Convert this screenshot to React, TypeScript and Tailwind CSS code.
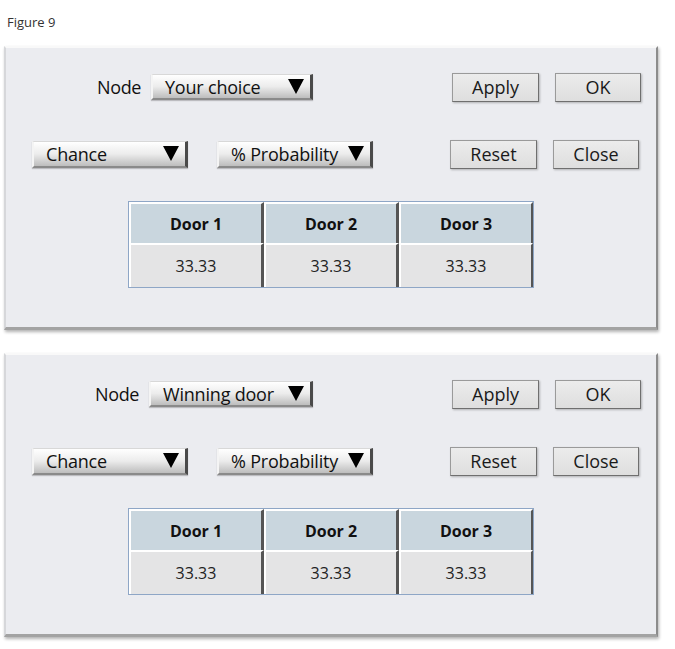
import { ReactNode } from 'react'

const font = { fontFamily: '"Open Sans", "DejaVu Sans", sans-serif' }

function Arrow() {
  return (
    <svg width="16" height="15" viewBox="0 0 16 15" className="shrink-0">
      <polygon points="0,0 16,0 8,15" fill="#000" />
    </svg>
  )
}

function Dropdown({ label, width, height }: { label: string; width: string; height: string }) {
  return (
    <div
      className={`${width} ${height} flex items-center pl-3 pr-[6px] bg-gradient-to-b from-[#ffffff] via-[#ececec] to-[#bdbdbd] border-t border-t-[#d8d8d8] border-l-2 border-l-[#f4f4f4] border-r-[3px] border-r-[#4a4a4a] border-b-2 border-b-[#8a8a8a] shadow-[0_1px_1px_rgba(0,0,0,0.2)]`}
    >
      <span className="flex-1 text-[18px] leading-none tracking-[-0.2px] text-[#111]">{label}</span>
      <Arrow />
    </div>
  )
}

function Button({ children, width }: { children: ReactNode; width: string }) {
  return (
    <div
      className={`${width} h-[29px] flex items-center justify-center bg-gradient-to-b from-[#ececec] to-[#dedede] border border-[#9a9a9a] border-r-[#6f6f6f] border-b-[#6f6f6f] shadow-[1px_1px_2px_rgba(0,0,0,0.25)] text-[18px] leading-none text-[#1a1a1a]`}
    >
      {children}
    </div>
  )
}

function Cell({ children, header, last }: { children: ReactNode; header?: boolean; last?: boolean }) {
  return (
    <div
      className={`flex-1 flex items-center justify-center border-l-2 border-l-white border-t-2 border-t-white ${
        last ? 'border-r-2 border-r-[#555]' : 'border-r-[3px] border-r-[#555]'
      } ${header ? 'bg-[#c9d6de] font-bold text-[16px] text-[#111]' : 'bg-[#e4e4e5] text-[16px] text-[#222]'}`}
    >
      {children}
    </div>
  )
}

function Panel({ node, ddLeft, ddWidth }: { node: string; ddLeft: string; ddWidth: string }) {
  return (
    <div className="ml-[4px] w-[654px] bg-[#ebecf0] border-t-2 border-t-[#f9f9f9] border-l-2 border-l-[#d6d7da] border-r-2 border-r-[#8c8c8c] border-b-[3px] border-b-[#a3a3a3] shadow-[1px_2px_3px_rgba(0,0,0,0.3)] pt-[24px] pb-[39px]">
      <div className="flex items-center h-[30px]">
        <div className={`${ddLeft} flex justify-end pr-[10px]`}>
          <span className="text-[18px] leading-none tracking-[-0.4px] text-[#111]">Node</span>
        </div>
        <Dropdown label={node} width={ddWidth} height="h-[26px]" />
        <div className="ml-auto mr-[15px] flex gap-[16px]">
          <Button width="w-[87px]">Apply</Button>
          <Button width="w-[86px]">OK</Button>
        </div>
      </div>
      <div className="flex items-center h-[30px] mt-[37px]">
        <div className="ml-[26px]">
          <Dropdown label="Chance" width="w-[156px]" height="h-[27px]" />
        </div>
        <div className="ml-[29px]">
          <Dropdown label="% Probability" width="w-[156px]" height="h-[27px]" />
        </div>
        <div className="ml-auto mr-[17px] flex gap-[16px]">
          <Button width="w-[87px]">Reset</Button>
          <Button width="w-[86px]">Close</Button>
        </div>
      </div>
      <div className="ml-[122px] mt-[32px] w-[406px] border border-[#8ea6c6] flex flex-col">
        <div className="flex h-[41px]">
          <Cell header>Door 1</Cell>
          <Cell header>Door 2</Cell>
          <Cell header last>Door 3</Cell>
        </div>
        <div className="flex h-[44px]">
          <Cell>33.33</Cell>
          <Cell>33.33</Cell>
          <Cell last>33.33</Cell>
        </div>
      </div>
    </div>
  )
}

export default function App() {
  return (
    <div className="w-[675px] h-[649px] bg-white" style={font}>
      <div className="pt-[13px] pl-[7px] h-[46px] text-[13px] text-[#333]">Figure 9</div>
      <Panel node="Your choice" ddLeft="w-[145px]" ddWidth="w-[162px]" />
      <div className="h-[23px]" />
      <Panel node="Winning door" ddLeft="w-[143px]" ddWidth="w-[164px]" />
    </div>
  )
}
